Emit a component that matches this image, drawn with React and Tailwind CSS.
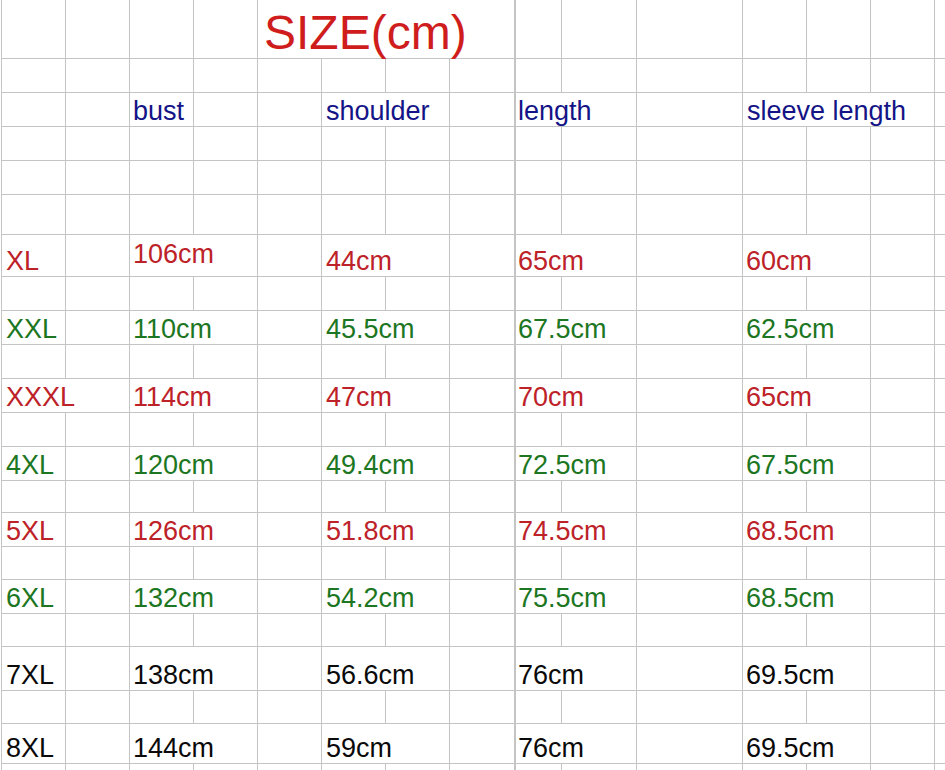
import React from 'react';

const RED = 'text-[#bd2228]';
const GREEN = 'text-[#1c7622]';
const BLACK = 'text-[#0a0a0a]';
const BLUE = 'text-[#141487]';

function Cell({ className = '', children }) {
  return (
    <div className={`bg-white flex items-end whitespace-nowrap leading-none ${className}`}>
      {children}
    </div>
  );
}

function SpacerRow() {
  return (
    <>
      <Cell />
      <Cell />
      <Cell />
      <Cell />
      <Cell />
      <Cell />
      <Cell />
      <Cell />
      <Cell className="border-l border-[#c4c4c4]" />
      <Cell />
      <Cell />
      <Cell />
      <Cell />
      <Cell />
      <Cell />
    </>
  );
}

function DataRow({ size, bust, shoulder, length, sleeve, color, wide, bustUp }) {
  return (
    <>
      {wide ? (
        <Cell className={`col-span-2 pl-[4px] pb-[1px] ${color}`}>{size}</Cell>
      ) : (
        <>
          <Cell className={`pl-[4px] pb-[1px] ${color}`}>{size}</Cell>
          <Cell />
        </>
      )}
      <Cell className={`col-span-2 pl-[3px] ${bustUp ? 'pb-[8px]' : 'pb-[1px]'} ${color}`}>{bust}</Cell>
      <Cell />
      <Cell className={`col-span-2 pl-[4px] pb-[1px] ${color}`}>{shoulder}</Cell>
      <Cell />
      <Cell className={`col-span-2 border-l border-[#c4c4c4] pl-[2px] pb-[1px] ${color}`}>{length}</Cell>
      <Cell />
      <Cell className={`col-span-2 pl-[3px] pb-[1px] ${color}`}>{sleeve}</Cell>
      <Cell />
      <Cell />
    </>
  );
}

const rows = [
  { size: 'XL', bust: '106cm', shoulder: '44cm', length: '65cm', sleeve: '60cm', color: RED, bustUp: true },
  { size: 'XXL', bust: '110cm', shoulder: '45.5cm', length: '67.5cm', sleeve: '62.5cm', color: GREEN },
  { size: 'XXXL', bust: '114cm', shoulder: '47cm', length: '70cm', sleeve: '65cm', color: RED, wide: true },
  { size: '4XL', bust: '120cm', shoulder: '49.4cm', length: '72.5cm', sleeve: '67.5cm', color: GREEN },
  { size: '5XL', bust: '126cm', shoulder: '51.8cm', length: '74.5cm', sleeve: '68.5cm', color: RED },
  { size: '6XL', bust: '132cm', shoulder: '54.2cm', length: '75.5cm', sleeve: '68.5cm', color: GREEN },
  { size: '7XL', bust: '138cm', shoulder: '56.6cm', length: '76cm', sleeve: '69.5cm', color: BLACK },
  { size: '8XL', bust: '144cm', shoulder: '59cm', length: '76cm', sleeve: '69.5cm', color: BLACK },
];

export default function App() {
  return (
    <div className="w-[945px] h-[770px] overflow-hidden bg-white pl-px">
      <div className="grid gap-px bg-[#c4c4c4] border-l border-[#c4c4c4] font-['Liberation_Sans',Arial,sans-serif] text-[27px] grid-cols-[63px_63px_63px_63px_63px_63px_63px_64px_46px_74px_105px_63px_63px_63px_10px] grid-rows-[58px_33px_33px_33px_33px_39px_41px_33px_33px_33px_33px_33px_33px_31px_33px_32px_33px_32px_43px_32px_39px_6px]">
        {/* title row */}
        <Cell />
        <Cell />
        <Cell />
        <Cell />
        <Cell className="col-span-4 pl-[6px] pb-[1px] text-[48px] text-[#cf1d1d]">SIZE(cm)</Cell>
        <Cell className="border-l border-[#c4c4c4]" />
        <Cell />
        <Cell />
        <Cell />
        <Cell />
        <Cell />
        <Cell />

        <SpacerRow />

        {/* header row */}
        <Cell />
        <Cell />
        <Cell className={`pl-[3px] pb-[1px] ${BLUE}`}>bust</Cell>
        <Cell />
        <Cell />
        <Cell className={`col-span-2 pl-[4px] pb-[1px] ${BLUE}`}>shoulder</Cell>
        <Cell />
        <Cell className={`col-span-2 border-l border-[#c4c4c4] pl-[2px] pb-[1px] ${BLUE}`}>length</Cell>
        <Cell />
        <Cell className={`col-span-3 pl-[4px] pb-[1px] ${BLUE}`}>sleeve length</Cell>
        <Cell />

        <SpacerRow />
        <SpacerRow />
        <SpacerRow />

        {rows.map((r) => (
          <React.Fragment key={r.size}>
            <DataRow {...r} />
            <SpacerRow />
          </React.Fragment>
        ))}
      </div>
    </div>
  );
}
